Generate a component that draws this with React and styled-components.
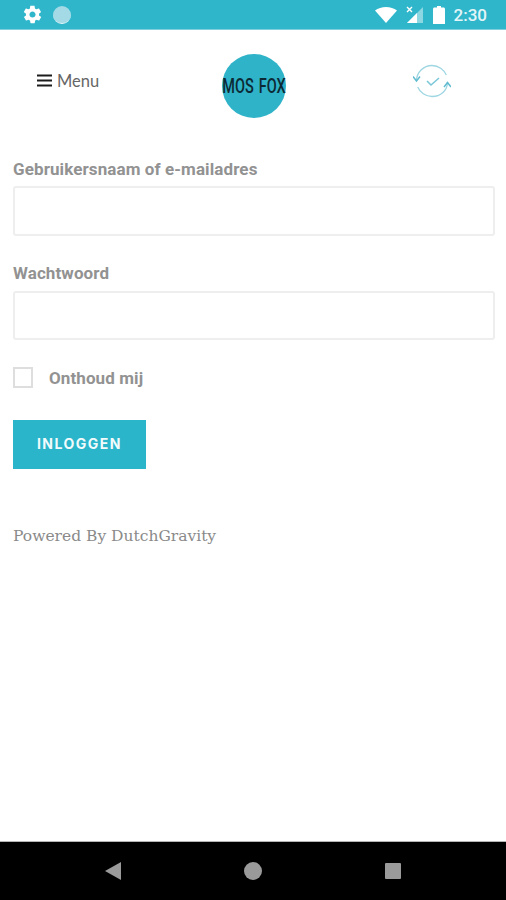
import styled, { createGlobalStyle } from "styled-components";

const GlobalStyle = createGlobalStyle`
  html, body {
    margin: 0;
    padding: 0;
    background: #fff;
  }
  * {
    box-sizing: border-box;
  }
`;

export default function App() {
  return (
    <Screen>
      <GlobalStyle />
      <StatusBar>
        <StatusLeft>
          <svg width="21" height="21" viewBox="0 0 24 24">
            <path
              fill="#fff"
              d="M19.4 13c.1-.3.1-.7.1-1s0-.7-.1-1l2.100-1.600c.2-.2.2-.4.1-.6l-2-3.500c-.1-.2-.4-.3-.6-.2l-2.500 1c-.5-.4-1.100-.7-1.700-1l-.4-2.600c0-.3-.2-.5-.5-.5h-4c-.3 0-.5.2-.5.500l-.4 2.600c-.6.300-1.200.6-1.700 1l-2.500-1c-.2-.1-.5 0-.6.2l-2 3.500c-.1.200-.1.400.1.600L4.600 11c-.1.300-.1.700-.1 1s0 .7.1 1l-2.100 1.600c-.2.2-.2.4-.1.6l2 3.500c.1.200.4.300.6.200l2.500-1c.5.400 1.100.7 1.700 1l.4 2.600c0 .3.2.5.5.5h4c.3 0 .5-.2.5-.5l.4-2.600c.6-.3 1.200-.6 1.700-1l2.500 1c.2.1.5 0 .6-.2l2-3.500c.1-.2.1-.4-.1-.6L19.400 13zM12 15.500c-1.900 0-3.500-1.600-3.500-3.500s1.600-3.500 3.500-3.500 3.500 1.600 3.500 3.500-1.600 3.500-3.500 3.500z"
            />
          </svg>
          <StatusDot />
        </StatusLeft>
        <StatusRight>
          <svg width="22" height="16" viewBox="0 0 22 16">
            <path fill="#fff" d="M0 3.500C3 1.200 6.800 0 11 0s8 1.200 11 3.500L11 16z" />
          </svg>
          <svg width="18" height="18" viewBox="0 0 18 18">
            <path fill="#fff" fillOpacity="0.45" d="M17 1v16H1z" />
            <path fill="#fff" d="M11 7v10H1z" />
            <path stroke="#fff" strokeWidth="1.400" d="M1 1l5 5M6 1L1 6" />
          </svg>
          <svg width="12" height="18" viewBox="0 0 12 18">
            <path fill="#fff" d="M4 0h4v1.500h2.500c.8 0 1.500.7 1.500 1.500V18H0V3c0-.8.7-1.500 1.500-1.500H4z" />
          </svg>
          <Clock>2:30</Clock>
        </StatusRight>
      </StatusBar>

      <Header>
        <MenuLink>
          <svg width="15" height="13" viewBox="0 0 15 13">
            <path stroke="#1c1c1c" strokeWidth="2" d="M0 1.500h15M0 6.500h15M0 11.500h15" />
          </svg>
          Menu
        </MenuLink>
        <Logo>
          <LogoText>MOS FOX</LogoText>
        </Logo>
        <SyncIcon width="38" height="38" viewBox="0 0 38 38" fill="none">
          <path stroke="#9ed6e2" strokeWidth="1.300" d="M3.500 19C3.500 10.400 10.400 3.500 19 3.500c6.500 0 12 4 14.300 9.500" />
          <path stroke="#9ed6e2" strokeWidth="1.300" d="M34.500 20c0 8.600-6.900 14.500-15.500 14.500-6.500 0-12-4-14.300-9.500" />
          <path stroke="#62bcd0" strokeWidth="1.500" d="M0 14.500l3.500 4.500 3.500-4.500M31 25l3.500-4.500L38 25" />
          <path stroke="#7cc8d8" strokeWidth="1.600" d="M14 19l4 4 8-7" />
        </SyncIcon>
      </Header>

      <Form>
        <Field>
          <Label $gap={6}>Gebruikersnaam of e-mailadres</Label>
          <Input type="text" $height={50} />
        </Field>
        <Field>
          <Label $gap={7}>Wachtwoord</Label>
          <Input type="password" $height={49} />
        </Field>
        <RememberRow>
          <Checkbox />
          <RememberText>Onthoud mij</RememberText>
        </RememberRow>
        <SubmitButton>INLOGGEN</SubmitButton>
        <PoweredBy>Powered By DutchGravity</PoweredBy>
      </Form>

      <NavBar>
        <svg width="16" height="18" viewBox="0 0 16 18">
          <path fill="#9a9a9a" d="M16 0v18L0 9z" />
        </svg>
        <NavCircle />
        <NavSquare />
      </NavBar>
    </Screen>
  );
}

const Screen = styled.div`
  width: 506px;
  height: 900px;
  display: flex;
  flex-direction: column;
  background: #fff;
  font-family: Roboto, sans-serif;
  overflow: hidden;
`;

const StatusBar = styled.div`
  height: 30px;
  flex: none;
  display: flex;
  align-items: center;
  justify-content: space-between;
  padding: 0 19px 0 22px;
  background: #2fb6cb;
  border-bottom: 1px solid #7fd0de;
`;

const StatusLeft = styled.div`
  display: flex;
  align-items: center;
  gap: 10px;
`;

const StatusDot = styled.div`
  width: 18px;
  height: 18px;
  border-radius: 50%;
  background: #a3dae6;
  border-bottom: 1px solid #e4f5f8;
`;

const StatusRight = styled.div`
  display: flex;
  align-items: center;
  gap: 9px;
`;

const Clock = styled.span`
  color: #e4f5f8;
  font-size: 17px;
  font-weight: 500;
`;

const Header = styled.header`
  height: 112px;
  flex: none;
  display: grid;
  grid-template-columns: 1fr 64px 1fr;
  align-items: center;
`;

const MenuLink = styled.div`
  display: flex;
  align-items: center;
  gap: 5px;
  margin: -11px 0 0 37px;
  color: #666;
  font-family: Lato, sans-serif;
  font-size: 16.500px;
`;

const Logo = styled.div`
  width: 64px;
  height: 64px;
  margin-left: 1px;
  display: flex;
  align-items: center;
  justify-content: center;
  border-radius: 50%;
  background: #2fb3c9;
`;

const LogoText = styled.span`
  flex: none;
  color: #0c2a35;
  font-family: Roboto, sans-serif;
  font-size: 21px;
  font-weight: 500;
  word-spacing: 2px;
  white-space: nowrap;
  transform: scaleX(0.69);
`;

const SyncIcon = styled.svg`
  justify-self: end;
  margin: -10px 55px 0 0;
`;

const Form = styled.form`
  flex: 1;
  display: flex;
  flex-direction: column;
  align-items: flex-start;
  padding: 16px 11px 0 13px;
`;

const Field = styled.div`
  width: 100%;
  margin-bottom: 26px;
`;

const Label = styled.label`
  display: block;
  margin-bottom: ${(props) => props.$gap}px;
  color: #929292;
  font-size: 17px;
  font-weight: 700;
  letter-spacing: 0.1px;
  line-height: 22px;
`;

const Input = styled.input`
  display: block;
  width: 100%;
  height: ${(props) => props.$height}px;
  border: 2px solid #eeeeee;
  border-radius: 3px;
  background: #fff;
`;

const RememberRow = styled.div`
  display: flex;
  align-items: center;
  gap: 16px;
  margin-top: 1px;
`;

const Checkbox = styled.div`
  width: 20px;
  height: 21px;
  border: 2px solid #dedede;
`;

const RememberText = styled.span`
  color: #929292;
  font-size: 17px;
  font-weight: 700;
  letter-spacing: 0.1px;
`;

const SubmitButton = styled.button`
  width: 133px;
  height: 49px;
  margin-top: 32px;
  padding: 0 0 2px;
  border: none;
  background: #2ab5cb;
  color: #f2fbfc;
  font-family: Inter, Roboto, sans-serif;
  font-size: 14px;
  font-weight: 700;
  letter-spacing: 1.500px;
`;

const PoweredBy = styled.p`
  margin: 57px 0 0;
  color: #8a8a8a;
  font-family: "DejaVu Serif", serif;
  font-size: 15.500px;
  line-height: 20px;
`;

const NavBar = styled.nav`
  height: 59px;
  flex: none;
  display: flex;
  align-items: center;
  justify-content: space-between;
  padding: 0 105px;
  background: #000;
  border-top: 1px solid #b5b5b5;
`;

const NavCircle = styled.div`
  width: 18px;
  height: 18px;
  border-radius: 50%;
  background: #9a9a9a;
`;

const NavSquare = styled.div`
  width: 16px;
  height: 16px;
  border-radius: 1px;
  background: #9a9a9a;
`;
